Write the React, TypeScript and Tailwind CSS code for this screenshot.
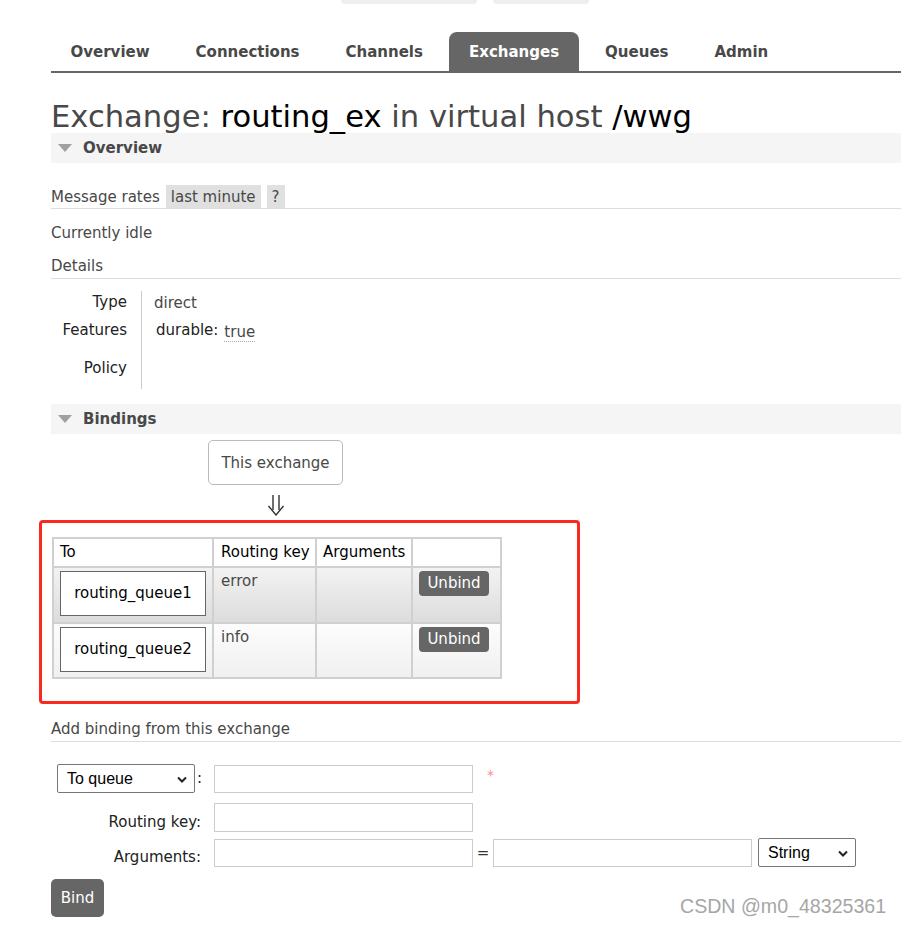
import React from "react";

const Tri = () => (
  <svg width="14" height="8" viewBox="0 0 14 8" className="ml-[7px]">
    <polygon points="0,0 14,0 7,8" fill="#a0a0a0" />
  </svg>
);

const SectionHeader = ({ title, className = "" }: { title: string; className?: string }) => (
  <div className={`h-[30px] bg-[#f5f5f5] flex items-center ${className}`}>
    <Tri />
    <span className="ml-[11px] font-bold text-[#484848]">{title}</span>
  </div>
);

const Chevron = ({ className = "" }: { className?: string }) => (
  <svg width="10" height="7" viewBox="0 0 10 7" className={className}>
    <polyline points="1,1.5 5,5.5 9,1.5" fill="none" stroke="#222" strokeWidth="2" />
  </svg>
);

const FakeSelect = ({ label, w, className = "" }: { label: string; w: string; className?: string }) => (
  <div
    className={`relative ${w} h-[29px] border border-[#767676] rounded-[2px] bg-white flex items-center pl-[9px] font-['Liberation_Sans',Arial,sans-serif] text-[16px] text-black ${className}`}
  >
    {label}
    <Chevron className="absolute right-[7px] top-[11px]" />
  </div>
);

const tabs = ["Overview", "Connections", "Channels", "Exchanges", "Queues", "Admin"];

export default function App() {
  return (
    <div className="relative w-[901px] h-[925px] overflow-hidden bg-white font-['DejaVu_Sans',Verdana,sans-serif] text-[15px] text-[#484848]">
      <div className="flex h-[4px] pl-[341px] gap-[16px]">
        <div className="w-[136px] h-full bg-[#eeeeee] rounded-b-[6px]" />
        <div className="w-[96px] h-full bg-[#eeeeee] rounded-b-[6px]" />
      </div>

      <div className="pl-[51px]">
        <div className="mt-[28px] flex gap-[7px] h-[41px] border-b-2 border-[#666]">
          {tabs.map((t) => (
            <div
              key={t}
              className={`h-full flex items-center pt-[1px] px-[19.5px] font-bold rounded-t-[8px] ${
                t === "Exchanges" ? "bg-[#666] text-white" : "text-[#484848]"
              }`}
            >
              {t}
            </div>
          ))}
        </div>

        <h1 className="mt-[29px] h-[30px] text-[30.6px] leading-[30px] text-[#484848] whitespace-nowrap">
          Exchange: <span className="text-black">routing_ex</span> in virtual host{" "}
          <span className="text-black">/wwg</span>
        </h1>

        <SectionHeader title="Overview" className="mt-[1px]" />

        <div className="mt-[22px] flex h-[24px] border-b border-[#ddd] items-stretch">
          <span className="flex items-center pt-[2px]">Message rates</span>
          <span className="ml-[6px] px-[5px] bg-[#e0e0e0] flex items-center pt-[2px]">last minute</span>
          <span className="ml-[6px] px-[5px] bg-[#e0e0e0] flex items-center pt-[2px]">?</span>
        </div>

        <div className="mt-[14px] leading-[20px]">Currently idle</div>
        <div className="mt-[12px] leading-[20px] pt-[1px] pb-[2px] border-b border-[#ddd]">Details</div>

        <div className="mt-[12px] flex">
          <div className="w-[91px] border-r border-[#ccc] pr-[14px] text-right text-[#222]">
            <div className="h-[23px] flex items-center justify-end">Type</div>
            <div className="h-[33px] flex items-center justify-end">Features</div>
            <div className="h-[42px] flex items-center justify-end">Policy</div>
          </div>
          <div className="pl-[12px]">
            <div className="h-[23px] flex items-center pt-[1px]">direct</div>
            <div className="h-[33px] flex items-center">
              <span className="ml-[2px] text-[#222]">durable:</span>
              <span className="ml-[6px] mt-[4px] border-b border-dotted border-[#aaa] leading-[17px]">true</span>
            </div>
            <div className="h-[42px]" />
          </div>
        </div>

        <SectionHeader title="Bindings" className="mt-[15px]" />

        <div className="ml-[157px] mt-[6px] w-[135px] h-[45px] border border-[#bbb] rounded-[5px] flex items-center justify-center pt-[1px]">
          This exchange
        </div>
        <div className="ml-[157px] mt-[10px] w-[135px] flex justify-center">
          <svg width="18" height="21" viewBox="0 0 18 21" className="ml-[1px]">
            <line x1="6" y1="0" x2="6" y2="15" stroke="#333" strokeWidth="1.4" />
            <line x1="12" y1="0" x2="12" y2="15" stroke="#333" strokeWidth="1.4" />
            <polyline points="1.5,11 9,20 16.5,11" fill="none" stroke="#333" strokeWidth="1.4" />
          </svg>
        </div>

        <div className="relative mt-[21px]">
          <div className="absolute left-[-12px] top-[-17px] w-[541px] h-[184px] border-[3px] border-[#fa2a21] rounded-[4px] pointer-events-none" />
          <table className="ml-[1px] border-collapse border border-[#ccc] table-fixed w-[448px]">
            <colgroup>
              <col className="w-[160px]" />
              <col className="w-[103px]" />
              <col className="w-[96px]" />
              <col className="w-[89px]" />
            </colgroup>
            <thead>
              <tr className="h-[29px]">
                <th className="border-2 border-[#d0d0d0] px-[6px] text-left font-normal text-black">To</th>
                <th className="border-2 border-[#d0d0d0] px-[7px] text-left font-normal text-black whitespace-nowrap">Routing key</th>
                <th className="border-2 border-[#d0d0d0] px-[6px] text-left font-normal text-black">Arguments</th>
                <th className="border-2 border-[#d0d0d0]" />
              </tr>
            </thead>
            <tbody>
              {[
                { q: "routing_queue1", k: "error", bg: "bg-linear-to-b from-[#f3f3f3] to-[#dcdcdc]", h: "h-[56px]" },
                { q: "routing_queue2", k: "info", bg: "bg-linear-to-b from-[#fdfdfd] to-[#f0f0f0]", h: "h-[55px]" },
              ].map((r) => (
                <tr key={r.q} className={`${r.h} ${r.bg}`}>
                  <td className="border-2 border-[#d0d0d0] align-top px-[6px] pt-[3px]">
                    <div className="w-[146px] h-[45px] border border-[#666] bg-white flex items-center justify-center text-black">
                      {r.q}
                    </div>
                  </td>
                  <td className="border-2 border-[#d0d0d0] align-top px-[7px] pt-[3px] leading-[20px]">{r.k}</td>
                  <td className="border-2 border-[#d0d0d0]" />
                  <td className="border-2 border-[#d0d0d0] align-top px-[6px] pt-[3px]">
                    <div className="w-[70px] h-[25px] rounded-[4px] bg-[#666] text-white flex items-center justify-center">
                      Unbind
                    </div>
                  </td>
                </tr>
              ))}
            </tbody>
          </table>
        </div>

        <div className="mt-[40px] leading-[20px] pb-[2px] border-b border-[#ddd]">Add binding from this exchange</div>

        <div className="mt-[22px] flex items-center h-[29px]">
          <div className="w-[163px] flex items-center">
            <FakeSelect label="To queue" w="w-[138px]" className="ml-[6px]" />
            <span className="ml-[2px] text-[#222]">:</span>
          </div>
          <div className="w-[259px] h-[28px] border border-[#ccc] bg-white" />
          <span className="ml-[14px] -mt-[6px] text-[#f88] text-[14px]">*</span>
        </div>

        <div className="mt-[10px] flex items-end h-[29px]">
          <div className="w-[163px] pr-[13px] text-right text-[#222] leading-[20px]">Routing key:</div>
          <div className="w-[259px] h-[29px] border border-[#ccc] bg-white" />
        </div>

        <div className="mt-[6px] flex items-end h-[29px]">
          <div className="w-[163px] pr-[13px] text-right text-[#222] leading-[20px]">Arguments:</div>
          <div className="w-[259px] h-[28px] border border-[#ccc] bg-white" />
          <div className="w-[20px] h-[28px] flex items-center justify-center text-[#333]">=</div>
          <div className="w-[259px] h-[28px] border border-[#ccc] bg-white" />
          <FakeSelect label="String" w="w-[98px]" className="ml-[6px]" />
        </div>

        <div className="mt-[12px] w-[53px] h-[38px] rounded-[5px] bg-[#666] text-white flex items-center justify-center">
          Bind
        </div>
      </div>

      <div className="absolute left-[680px] top-[894px] leading-[24px] text-[19.6px] text-[#a6a6a6] font-['Liberation_Sans',Arial,sans-serif] whitespace-nowrap">
        CSDN @m0_48325361
      </div>
    </div>
  );
}
